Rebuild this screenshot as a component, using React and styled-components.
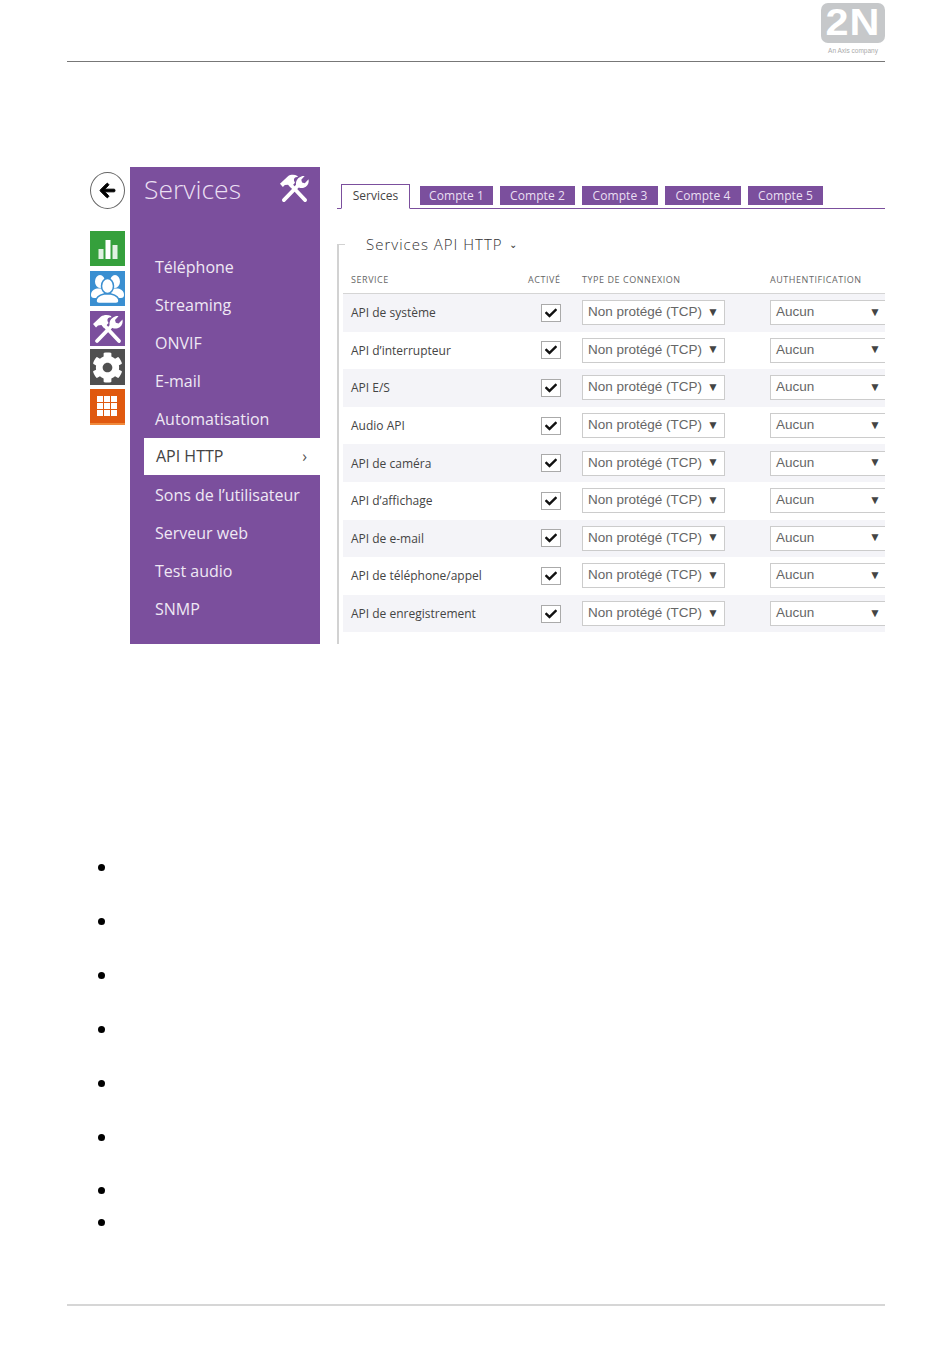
import React from 'react'
import styled, { createGlobalStyle } from 'styled-components'
import { FaArrowLeft, FaCheck, FaCog } from 'react-icons/fa'

const PURPLE = '#7b4f9d'

const GlobalStyle = createGlobalStyle`
  html, body {
    margin: 0;
    padding: 0;
    background: #fff;
  }
  body {
    font-family: 'Open Sans', 'Liberation Sans', sans-serif;
  }
`

const menu = [
  'Téléphone',
  'Streaming',
  'ONVIF',
  'E-mail',
  'Automatisation',
  'API HTTP',
  'Sons de l’utilisateur',
  'Serveur web',
  'Test audio',
  'SNMP',
]

const tabs = [
  { label: 'Services', width: 69 },
  { label: 'Compte 1', width: 73 },
  { label: 'Compte 2', width: 75 },
  { label: 'Compte 3', width: 76 },
  { label: 'Compte 4', width: 76 },
  { label: 'Compte 5', width: 75 },
]

const services = [
  'API de système',
  'API d’interrupteur',
  'API E/S',
  'Audio API',
  'API de caméra',
  'API d’affichage',
  'API de e-mail',
  'API de téléphone/appel',
  'API de enregistrement',
]

const bullets = [54, 54, 54, 54, 54, 53, 32, 0]

const ToolsIcon = ({ size }) => (
  <svg width={size} height={size} viewBox='0 0 32 32' fill='#fff'>
    {/* hammer */}
    <path d='M11.500 11.500 27 28' stroke='#fff' strokeWidth='3.800' strokeLinecap='round' />
    <path d='M1 11 9 3.500C12 1.500 16 1.500 19 3l.5 1.200C16.500 4 15 5.500 15.500 8l1 2-4.500 5-2.500-3-3.500.5L4 14.500Z' />
    {/* wrench */}
    <path d='M5 28 20 12.500' stroke='#fff' strokeWidth='3.800' strokeLinecap='round' />
    <path d='M18 13.500c-1.500-4 .5-8.500 5-10 1.500-.5 2.500-.5 3.500-.3L23 7l.8 2.800 2.800.7 3.900-4c.6 3 -.3 6-2.800 7.700-2.300 1.600-5 1.700-7.200.8Z' />
  </svg>
)

const UsersIcon = () => (
  <svg width='33' height='30' viewBox='0 0 33 30' fill='#fff'>
    <ellipse cx='9' cy='7.500' rx='5' ry='6.500' />
    <path d='M0 21c0-4 3-6 6-6.500h6L14 24H3c-2 0-3-1-3-3Z' />
    <ellipse cx='24' cy='7.500' rx='5' ry='6.500' />
    <path d='M33 21c0-4-3-6-6-6.500h-6L19 24h11c2 0 3-1 3-3Z' />
    <ellipse cx='16.500' cy='12' rx='6' ry='7.500' stroke='#3a8fd1' strokeWidth='1.500' />
    <path d='M5 27c0-4 4-6 8-7h7c4 1 8 3 8 7 0 1.500-1 2.500-3 2.500H8c-2 0-3-1-3-2.500Z' stroke='#3a8fd1' strokeWidth='1.500' />
  </svg>
)

const BarsIcon = () => (
  <svg width='20' height='20' viewBox='0 0 20 20' fill='#fff'>
    <rect x='0.500' y='10' width='5' height='10' opacity='0.850' />
    <rect x='7.500' y='1' width='5' height='19' />
    <rect x='14.500' y='6' width='5' height='14' opacity='0.850' />
  </svg>
)

const GridIcon = () => (
  <svg width='21' height='20' viewBox='0 0 21 20' fill='#fff'>
    {[0, 7, 14].map((y) =>
      [0, 7, 14].map((x) => <rect key={`${x}-${y}`} x={x} y={y} width='6' height='6' />)
    )}
  </svg>
)

const App = () => {
  return (
    <Page>
      <GlobalStyle />
      <Header>
        <LogoWrap>
          <Logo>
            <LogoMark>2N</LogoMark>
          </Logo>
          <LogoText>An Axis company</LogoText>
        </LogoWrap>
      </Header>

      <Shot>
        <Rail>
          <BackButton>
            <BackArrow />
          </BackButton>
          <Tile $bg='#35a03c' $mt={22}>
            <BarsIcon />
          </Tile>
          <Tile $bg='#3a8fd1' $mt={5}>
            <UsersIcon />
          </Tile>
          <Tile $bg={PURPLE} $mt={5}>
            <ToolsIcon size={32} />
          </Tile>
          <Tile $bg='#505050' $mt={3} $h={36}>
            <FaCog size={31} color='#fff' />
          </Tile>
          <Tile $bg='#e0590f' $mt={4} $h={36} $edge='#f08a3c'>
            <GridIcon />
          </Tile>
        </Rail>

        <Sidebar>
          <SideHead>
            <SideTitle>Services</SideTitle>
            <ToolsIcon size={31} />
          </SideHead>
          <Menu>
            {menu.map((item) => (
              <MenuItem key={item} $active={item === 'API HTTP'}>
                {item}
                {item === 'API HTTP' && <Chevron>›</Chevron>}
              </MenuItem>
            ))}
          </Menu>
        </Sidebar>

        <Content>
          <Tabs>
            {tabs.map((tab, i) => (
              <Tab key={tab.label} $active={i === 0} $w={tab.width}>
                {tab.label}
              </Tab>
            ))}
          </Tabs>

          <Frame>
            <SectionTitle>
              Services API HTTP <Caret>⌄</Caret>
            </SectionTitle>
            <HeadRow>
              <span>Service</span>
              <span>Activé</span>
              <span>Type de connexion</span>
              <span>Authentification</span>
            </HeadRow>
            {services.map((name, i) => (
              <Row key={name} $shaded={i % 2 === 0}>
                <ServiceName>{name}</ServiceName>
                <CheckBox>
                  <FaCheck size={12} color='#111' />
                </CheckBox>
                <Select>
                  Non protégé (TCP)
                  <Arrow>▼</Arrow>
                </Select>
                <Select $cut>
                  Aucun
                  <Arrow>▼</Arrow>
                </Select>
              </Row>
            ))}
          </Frame>
        </Content>
      </Shot>

      <BulletList>
        {bullets.map((gap, i) => (
          <Bullet key={i} $gap={gap} />
        ))}
      </BulletList>

      <Footer />
    </Page>
  )
}

const Page = styled.div`
  width: 950px;
  height: 1369px;
  display: flex;
  flex-direction: column;
  overflow: hidden;
`

const Header = styled.header`
  height: 58px;
  margin: 0 65px 0 67px;
  padding-top: 3px;
  border-bottom: 1px solid #777;
  display: flex;
  justify-content: flex-end;
`

const LogoWrap = styled.div`
  width: 64px;
  display: flex;
  flex-direction: column;
  align-items: center;
`

const Logo = styled.div`
  width: 64px;
  height: 40px;
  border-radius: 7px;
  background: #c6c8ca;
  display: flex;
  align-items: center;
  justify-content: center;
`

const LogoMark = styled.span`
  color: #fff;
  font-family: 'Liberation Sans', sans-serif;
  font-weight: 700;
  font-size: 36px;
  line-height: 40px;
  letter-spacing: 1px;
  transform: scaleX(1.15);
`

const LogoText = styled.div`
  margin-top: 3px;
  font-family: 'Liberation Sans', sans-serif;
  font-size: 6.5px;
  line-height: 9px;
  color: #aaa;
  white-space: nowrap;
`

const Shot = styled.section`
  margin: 105px 65px 0 90px;
  height: 477px;
  display: flex;
`

const Rail = styled.div`
  width: 35px;
  margin-right: 5px;
  padding-top: 5px;
  display: flex;
  flex-direction: column;
`

const BackButton = styled.div`
  width: 33px;
  height: 35px;
  border: 1px solid #666;
  border-radius: 50%;
  display: flex;
  align-items: center;
  justify-content: center;
`

const BackArrow = styled(FaArrowLeft)`
  width: 17px;
  height: 17px;
  color: #000;
  stroke: #000;
  stroke-width: 30px;
`

const Tile = styled.div`
  width: 35px;
  height: ${(p) => p.$h || 35}px;
  margin-top: ${(p) => p.$mt}px;
  background: ${(p) => p.$bg};
  display: flex;
  align-items: center;
  justify-content: center;
  box-sizing: border-box;
  border-bottom: ${(p) => (p.$edge ? `2px solid ${p.$edge}` : 'none')};
`

const Sidebar = styled.nav`
  width: 190px;
  background: ${PURPLE};
  flex-shrink: 0;
`

const SideHead = styled.div`
  height: 81px;
  padding: 6px 10px 0 14px;
  box-sizing: border-box;
  display: flex;
  justify-content: space-between;
  align-items: flex-start;
`

const SideTitle = styled.h1`
  margin: 0;
  font-size: 26.500px;
  line-height: 32px;
  font-weight: 300;
  color: #eadff2;
`

const Menu = styled.ul`
  list-style: none;
  margin: 0;
  padding: 0;
`

const MenuItem = styled.li`
  height: ${(p) => (p.$active ? 37 : 38)}px;
  margin: ${(p) => (p.$active ? '0 0 1px 14px' : '0')};
  padding: 0 13px ${(p) => (p.$active ? 2 : 0)}px ${(p) => (p.$active ? 12 : 25)}px;
  box-sizing: border-box;
  display: flex;
  align-items: center;
  justify-content: space-between;
  font-size: 16px;
  color: ${(p) => (p.$active ? '#444' : '#efe8f4')};
  background: ${(p) => (p.$active ? '#fff' : 'transparent')};
`

const Chevron = styled.span`
  font-size: 16px;
  color: #555;
`

const Content = styled.div`
  flex: 1;
  min-width: 0;
  margin-left: 17px;
  display: flex;
  flex-direction: column;
`

const Tabs = styled.div`
  height: 24px;
  margin-top: 17px;
  padding-left: 4px;
  border-bottom: 1px solid ${PURPLE};
  display: flex;
  align-items: flex-start;
  gap: 7px;
`

const Tab = styled.div`
  width: ${(p) => p.$w}px;
  height: ${(p) => (p.$active ? 25 : 19)}px;
  margin-top: ${(p) => (p.$active ? 0 : 2)}px;
  margin-right: ${(p) => (p.$active ? 3 : 0)}px;
  box-sizing: border-box;
  text-align: center;
  font-size: 12px;
  line-height: ${(p) => (p.$active ? 22 : 19)}px;
  letter-spacing: ${(p) => (p.$active ? 0 : 0.1)}px;
  color: ${(p) => (p.$active ? '#444' : '#eadff2')};
  background: ${(p) => (p.$active ? '#fff' : PURPLE)};
  border: ${(p) => (p.$active ? `1px solid ${PURPLE}` : 'none')};
  border-bottom-color: #fff;
  position: relative;
  z-index: 1;
`

const Frame = styled.div`
  margin-top: 35px;
  flex: 1;
  border-left: 2px solid #d2d2d2;
  position: relative;
  padding-left: 4px;
  &::before {
    content: '';
    position: absolute;
    left: 0;
    top: 0;
    width: 6px;
    height: 1px;
    background: #d2d2d2;
  }
`

const SectionTitle = styled.h2`
  margin: -10px 0 0;
  height: 31px;
  padding-left: 23px;
  font-size: 15px;
  line-height: 20px;
  font-weight: 300;
  letter-spacing: 1px;
  color: #333;
`

const Caret = styled.span`
  font-size: 10px;
  margin-left: 2px;
  vertical-align: 2px;
`

const cols = `
  display: grid;
  grid-template-columns: 177px 54px 188px 115px;
  padding-left: 8px;
  align-items: center;
`

const HeadRow = styled.div`
  ${cols}
  height: 29px;
  border-bottom: 1px solid #d5d5d5;
  box-sizing: border-box;
  font-size: 9px;
  letter-spacing: 0.55px;
  text-transform: uppercase;
  color: #666;
  white-space: nowrap;
`

const Row = styled.div`
  ${cols}
  height: 37.6px;
  background: ${(p) => (p.$shaded ? '#f4f4f8' : '#fff')};
`

const ServiceName = styled.span`
  font-size: 12px;
  color: #444;
`

const CheckBox = styled.div`
  width: 18px;
  height: 16px;
  margin-left: 13px;
  border: 1px solid #aaa;
  background: #fff;
  display: flex;
  align-items: center;
  justify-content: center;
`

const Select = styled.div`
  width: ${(p) => (p.$cut ? 115 : 143)}px;
  height: 25px;
  box-sizing: border-box;
  padding: 0 ${(p) => (p.$cut ? 4 : 5)}px 2px 5px;
  background: #fff;
  border: 1px solid #ccc;
  border-right: ${(p) => (p.$cut ? 'none' : '1px solid #ccc')};
  font-family: 'Liberation Sans', sans-serif;
  font-size: 13.500px;
  color: #666;
  display: flex;
  align-items: center;
  justify-content: space-between;
`

const Arrow = styled.span`
  font-size: 12px;
  color: #444;
`

const BulletList = styled.ul`
  list-style: none;
  margin: 220px 0 0 98px;
  padding: 0;
`

const Bullet = styled.li`
  width: 7px;
  height: 7px;
  border-radius: 50%;
  background: #000;
  margin-bottom: ${(p) => (p.$gap ? p.$gap - 7 : 0)}px;
`

const Footer = styled.footer`
  margin: 78px 65px 0 67px;
  border-top: 2px solid #d6d6d6;
`

export default App
